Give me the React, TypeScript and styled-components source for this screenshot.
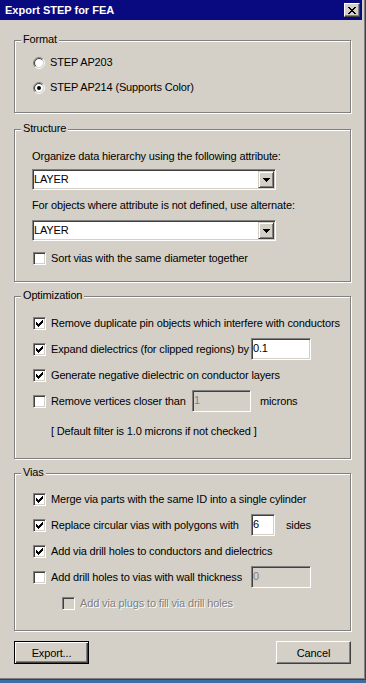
import React from "react";
import styled, { createGlobalStyle, css } from "styled-components";

const GlobalStyle = createGlobalStyle`
    html, body {
        margin: 0;
        padding: 0;
    }
    body {
        background: #3a6ea5;
        font-family: "Liberation Sans", Arial, sans-serif;
        font-size: 11px;
        letter-spacing: -0.15px;
        color: #000;
    }
`;

// classic 3d edges
const sunken = css`
    border: 1px solid;
    border-color: #808080 #fff #fff #808080;
    box-shadow: inset 1px 1px 0 #404040, inset -1px -1px 0 #d4d0c8;
`;

const raised = css`
    border: 1px solid;
    border-color: #fff #404040 #404040 #fff;
    box-shadow: inset -1px -1px 0 #808080;
`;

const checkPixels = [
    [6, 0], [5, 1], [6, 1], [0, 2], [4, 2], [5, 2], [6, 2],
    [0, 3], [1, 3], [3, 3], [4, 3], [5, 3],
    [0, 4], [1, 4], [2, 4], [3, 4], [4, 4],
    [1, 5], [2, 5], [3, 5], [2, 6],
];

const closePixels = [
    [0, 0], [1, 0], [6, 0], [7, 0],
    [1, 1], [2, 1], [5, 1], [6, 1],
    [2, 2], [3, 2], [4, 2], [5, 2],
    [3, 3], [4, 3],
    [2, 4], [3, 4], [4, 4], [5, 4],
    [1, 5], [2, 5], [5, 5], [6, 5],
    [0, 6], [1, 6], [6, 6], [7, 6],
];

const PixelIcon: React.FC<{ pixels: number[][]; w: number; h: number }> = ({ pixels, w, h }) => (
    <svg width={w} height={h} viewBox={`0 0 ${w} ${h}`} shapeRendering="crispEdges">
        {pixels.map(([x, y]) => (
            <rect key={`${x}-${y}`} x={x} y={y} width={1} height={1} fill="#000" />
        ))}
    </svg>
);

const Radio: React.FC<{ checked?: boolean }> = ({ checked }) => {
    const half = (r: number, a: string, b: string) => {
        const d = r * 0.7071;
        const bl = `${6 - d} ${6 + d}`;
        const tr = `${6 + d} ${6 - d}`;
        return (
            <>
                <path d={`M ${bl} A ${r} ${r} 0 0 1 ${tr}`} stroke={a} fill="none" />
                <path d={`M ${tr} A ${r} ${r} 0 0 1 ${bl}`} stroke={b} fill="none" />
            </>
        );
    };
    return (
        <RadioBox width={12} height={12} viewBox="0 0 12 12">
            <circle cx={6} cy={6} r={4.2} fill="#fff" />
            {half(5.5, "#808080", "#fff")}
            {half(4.5, "#404040", "#d4d0c8")}
            {checked && <circle cx={6} cy={6} r={2} fill="#000" />}
        </RadioBox>
    );
};

const Check: React.FC<{ checked?: boolean; disabled?: boolean }> = ({ checked, disabled }) => (
    <CheckBox $disabled={disabled}>{checked && <PixelIcon pixels={checkPixels} w={7} h={7} />}</CheckBox>
);

const Combo: React.FC<{ value: string }> = ({ value }) => (
    <ComboBox>
        <ComboText>{value}</ComboText>
        <DropButton>
            <svg width={7} height={4} viewBox="0 0 7 4" shapeRendering="crispEdges">
                <path d="M0 0h7v1h-1v1h-1v1h-1v1h-1v-1h-1v-1h-1v-1h-1z" fill="#000" />
            </svg>
        </DropButton>
    </ComboBox>
);

export default function App() {
    return (
        <Page>
            <GlobalStyle />
            <Window>
                <TitleBar>
                    <Title>Export STEP for FEA</Title>
                    <CloseButton>
                        <PixelIcon pixels={closePixels} w={8} h={7} />
                    </CloseButton>
                </TitleBar>

                <Body>
                    <Group $top={0} $pt={9} $pb={12}>
                        <Legend>Format</Legend>
                        <Row $h={25}>
                            <Radio />
                            <Label>STEP AP203</Label>
                        </Row>
                        <Row $h={25}>
                            <Radio checked />
                            <Label>STEP AP214 (Supports Color)</Label>
                        </Row>
                    </Group>

                    <Group $top={16} $pt={20} $pb={16}>
                        <Legend>Structure</Legend>
                        <FieldLabel>Organize data hierarchy using the following attribute:</FieldLabel>
                        <ComboWrap $top={6}>
                            <Combo value="LAYER" />
                        </ComboWrap>
                        <FieldLabel $top={9}>For objects where attribute is not defined, use alternate:</FieldLabel>
                        <ComboWrap $top={8}>
                            <Combo value="LAYER" />
                        </ComboWrap>
                        <Row $h={13} $top={11}>
                            <Check />
                            <Label>Sort vias with the same diameter together</Label>
                        </Row>
                    </Group>

                    <Group $top={14} $pt={13} $pb={14}>
                        <Legend>Optimization</Legend>
                        <Row>
                            <Check checked />
                            <Label>Remove duplicate pin objects which interfere with conductors</Label>
                        </Row>
                        <Row>
                            <Check checked />
                            <Label $w={200}>Expand dielectrics (for clipped regions) by</Label>
                            <TextInput $w={60} readOnly value="0.1" />
                        </Row>
                        <Row>
                            <Check checked />
                            <Label>Generate negative dielectric on conductor layers</Label>
                        </Row>
                        <Row>
                            <Check />
                            <Label $w={141}>Remove vertices closer than</Label>
                            <TextInput $w={59} readOnly disabled value="1" />
                            <Unit $gap={9}>microns</Unit>
                        </Row>
                        <Row $top={4} $indent={18}>
                            <span>[ Default filter is 1.0 microns if not checked ]</span>
                        </Row>
                    </Group>

                    <Group $top={14} $pt={12} $pb={14}>
                        <Legend>Vias</Legend>
                        <Row>
                            <Check checked />
                            <Label>Merge via parts with the same ID into a single cylinder</Label>
                        </Row>
                        <Row>
                            <Check checked />
                            <Label $w={200}>Replace circular vias with polygons with</Label>
                            <TextInput $w={24} readOnly value="6" />
                            <Unit $gap={11}>sides</Unit>
                        </Row>
                        <Row>
                            <Check checked />
                            <Label>Add via drill holes to conductors and dielectrics</Label>
                        </Row>
                        <Row>
                            <Check />
                            <Label $w={200}>Add drill holes to vias with wall thickness</Label>
                            <TextInput $w={60} readOnly disabled value="0" />
                        </Row>
                        <Row $indent={29}>
                            <Check disabled />
                            <Label $disabled>Add via plugs to fill via drill holes</Label>
                        </Row>
                    </Group>

                    <ButtonRow>
                        <Button $default>Export...</Button>
                        <Button>Cancel</Button>
                    </ButtonRow>
                </Body>
            </Window>
        </Page>
    );
}

const Page = styled.div`
    width: 366px;
    height: 683px;
    background: #3a6ea5;
    overflow: hidden;
`;

const Window = styled.div`
    box-sizing: border-box;
    width: 366px;
    height: 680px;
    background: #d4d0c8;
    border-right: 1px solid #404040;
    border-bottom: 1px solid #404040;
    box-shadow: inset -1px -1px 0 #808080;
    padding-right: 3px;
    display: flex;
    flex-direction: column;
`;

const TitleBar = styled.div`
    height: 20px;
    flex: none;
    background: #0a0a80;
    display: flex;
    align-items: center;
    justify-content: space-between;
    padding: 0 2px 0 5px;
`;

const Title = styled.span`
    color: #fff;
    font-weight: bold;
    font-size: 11px;
    letter-spacing: 0;
`;

const CloseButton = styled.div`
    box-sizing: border-box;
    width: 16px;
    height: 14px;
    background: #d4d0c8;
    ${raised};
    display: flex;
    align-items: center;
    justify-content: center;
`;

const Body = styled.div`
    padding: 20px 11px 0 14px;
    display: flex;
    flex-direction: column;
`;

const Group = styled.div<{ $top: number; $pt: number; $pb: number }>`
    position: relative;
    margin-top: ${p => p.$top}px;
    padding: ${p => p.$pt}px 8px ${p => p.$pb}px 18px;
    border: 1px solid #808080;
    box-shadow: inset 1px 1px 0 #fff, 1px 1px 0 #fff;
`;

const Legend = styled.span`
    position: absolute;
    top: -8px;
    left: 6px;
    padding: 0 2px;
    line-height: 13px;
    background: #d4d0c8;
`;

const Row = styled.div<{ $h?: number; $top?: number; $indent?: number }>`
    display: flex;
    align-items: center;
    height: ${p => p.$h ?? 26}px;
    margin-top: ${p => p.$top ?? 0}px;
    padding-left: ${p => p.$indent ?? 0}px;
    line-height: 13px;
    white-space: nowrap;
`;

const RadioBox = styled.svg`
    flex: none;
    display: block;
`;

const CheckBox = styled.span<{ $disabled?: boolean }>`
    box-sizing: border-box;
    flex: none;
    width: 13px;
    height: 13px;
    ${sunken};
    background: ${p => (p.$disabled ? "#d4d0c8" : "#fff")};
    display: flex;
    align-items: center;
    justify-content: center;
`;

const Label = styled.span<{ $w?: number; $disabled?: boolean }>`
    margin-left: 5px;
    flex: none;
    width: ${p => (p.$w ? `${p.$w}px` : "auto")};
    color: ${p => (p.$disabled ? "#808080" : "#000")};
    text-shadow: ${p => (p.$disabled ? "1px 1px 0 #fff" : "none")};
`;

const Unit = styled.span<{ $gap: number }>`
    flex: none;
    margin-left: ${p => p.$gap}px;
`;

const FieldLabel = styled.div<{ $top?: number }>`
    margin: ${p => p.$top ?? 0}px 0 0 -1px;
    line-height: 13px;
    white-space: nowrap;
`;

const ComboWrap = styled.div<{ $top: number }>`
    margin: ${p => p.$top}px 0 0 -1px;
`;

const ComboBox = styled.div`
    box-sizing: border-box;
    width: 244px;
    height: 21px;
    ${sunken};
    background: #fff;
    display: flex;
    align-items: center;
    justify-content: space-between;
    padding: 1px 1px 1px 1px;
`;

const ComboText = styled.span`
    line-height: 13px;
`;

const DropButton = styled.div`
    box-sizing: border-box;
    width: 16px;
    height: 17px;
    background: #d4d0c8;
    border: 1px solid;
    border-color: #d4d0c8 #404040 #404040 #d4d0c8;
    box-shadow: inset 1px 1px 0 #fff, inset -1px -1px 0 #808080;
    display: flex;
    align-items: center;
    justify-content: center;
`;

const TextInput = styled.input<{ $w: number }>`
    box-sizing: border-box;
    flex: none;
    width: ${p => p.$w}px;
    min-width: 0;
    height: 22px;
    margin: 0;
    padding: 0 1px 3px 1px;
    ${sunken};
    font: inherit;
    letter-spacing: inherit;
    color: #000;
    background: #fff;
    outline: none;

    &:disabled {
        background: #d4d0c8;
        color: #808080;
    }
`;

const ButtonRow = styled.div`
    margin-top: 10px;
    display: flex;
    justify-content: space-between;
`;

const Button = styled.button<{ $default?: boolean }>`
    box-sizing: border-box;
    width: 75px;
    height: 23px;
    padding: 0;
    font: inherit;
    letter-spacing: inherit;
    color: #000;
    background: #d4d0c8;
    ${raised};
    ${p =>
        p.$default &&
        css`
            border: 1px solid #000;
            box-shadow: inset 1px 1px 0 #fff, inset -1px -1px 0 #404040, inset -2px -2px 0 #808080;
        `}
`;
